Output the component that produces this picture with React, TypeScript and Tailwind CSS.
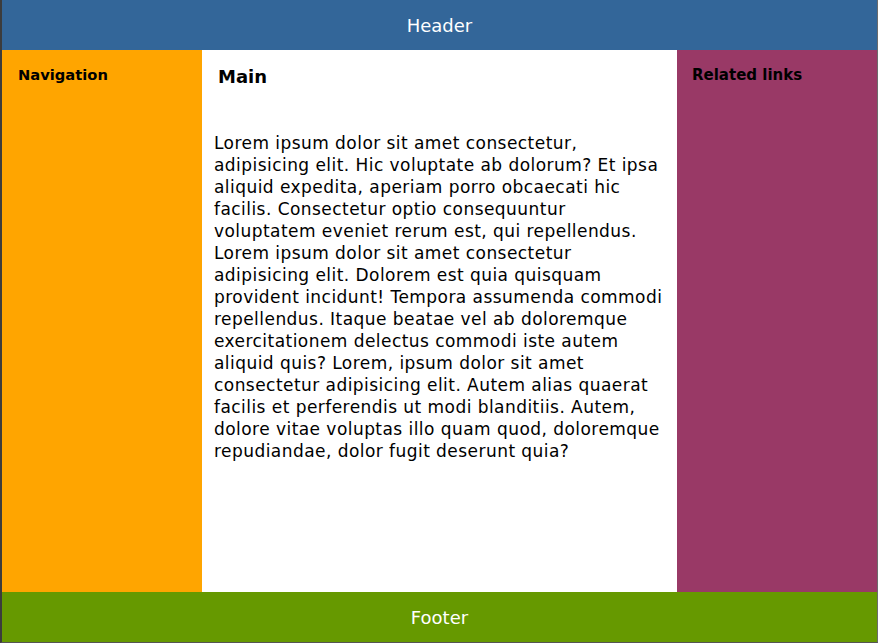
import React from 'react';

const App: React.FC = () => {
  return (
    <div className="h-[643px] w-[878px] flex flex-col border-l-2 border-b border-r border-l-[#3c3c3c] border-b-[#555] border-r-[#6b6b6b] font-['DejaVu_Sans',sans-serif] text-black">
      <header className="h-[50px] shrink-0 bg-[#336699] text-white text-[18px] flex items-center justify-center">
        Header
      </header>
      <div className="flex flex-1">
        <nav className="w-[200px] shrink-0 bg-[#ffa500] px-4 pt-[14px]">
          <h2 className="text-[14.7px] font-bold">Navigation</h2>
        </nav>
        <main className="flex-1 bg-white px-3 pt-[13px]">
          <h1 className="pl-1 text-[18px] font-bold">Main</h1>
          <p className="mt-[42px] text-[17px] tracking-[0.45px] leading-[22px]">
            Lorem ipsum dolor sit amet consectetur, adipisicing elit. Hic voluptate ab dolorum? Et ipsa
            aliquid expedita, aperiam porro obcaecati hic facilis. Consectetur optio consequuntur
            voluptatem eveniet rerum est, qui repellendus. Lorem ipsum dolor sit amet consectetur
            adipisicing elit. Dolorem est quia quisquam provident incidunt! Tempora assumenda commodi
            repellendus. Itaque beatae vel ab doloremque exercitationem delectus commodi iste autem
            aliquid quis? Lorem, ipsum dolor sit amet consectetur adipisicing elit. Autem alias quaerat
            facilis et perferendis ut modi blanditiis. Autem, dolore vitae voluptas illo quam quod,
            doloremque repudiandae, dolor fugit deserunt quia?
          </p>
        </main>
        <aside className="w-[200px] shrink-0 bg-[#993966] pl-[15px] pr-4 pt-[14px]">
          <h2 className="text-[15px] font-bold">Related links</h2>
        </aside>
      </div>
      <footer className="h-[50px] shrink-0 bg-[#669900] text-white text-[18px] flex items-center justify-center">
        Footer
      </footer>
    </div>
  );
};

export default App;
